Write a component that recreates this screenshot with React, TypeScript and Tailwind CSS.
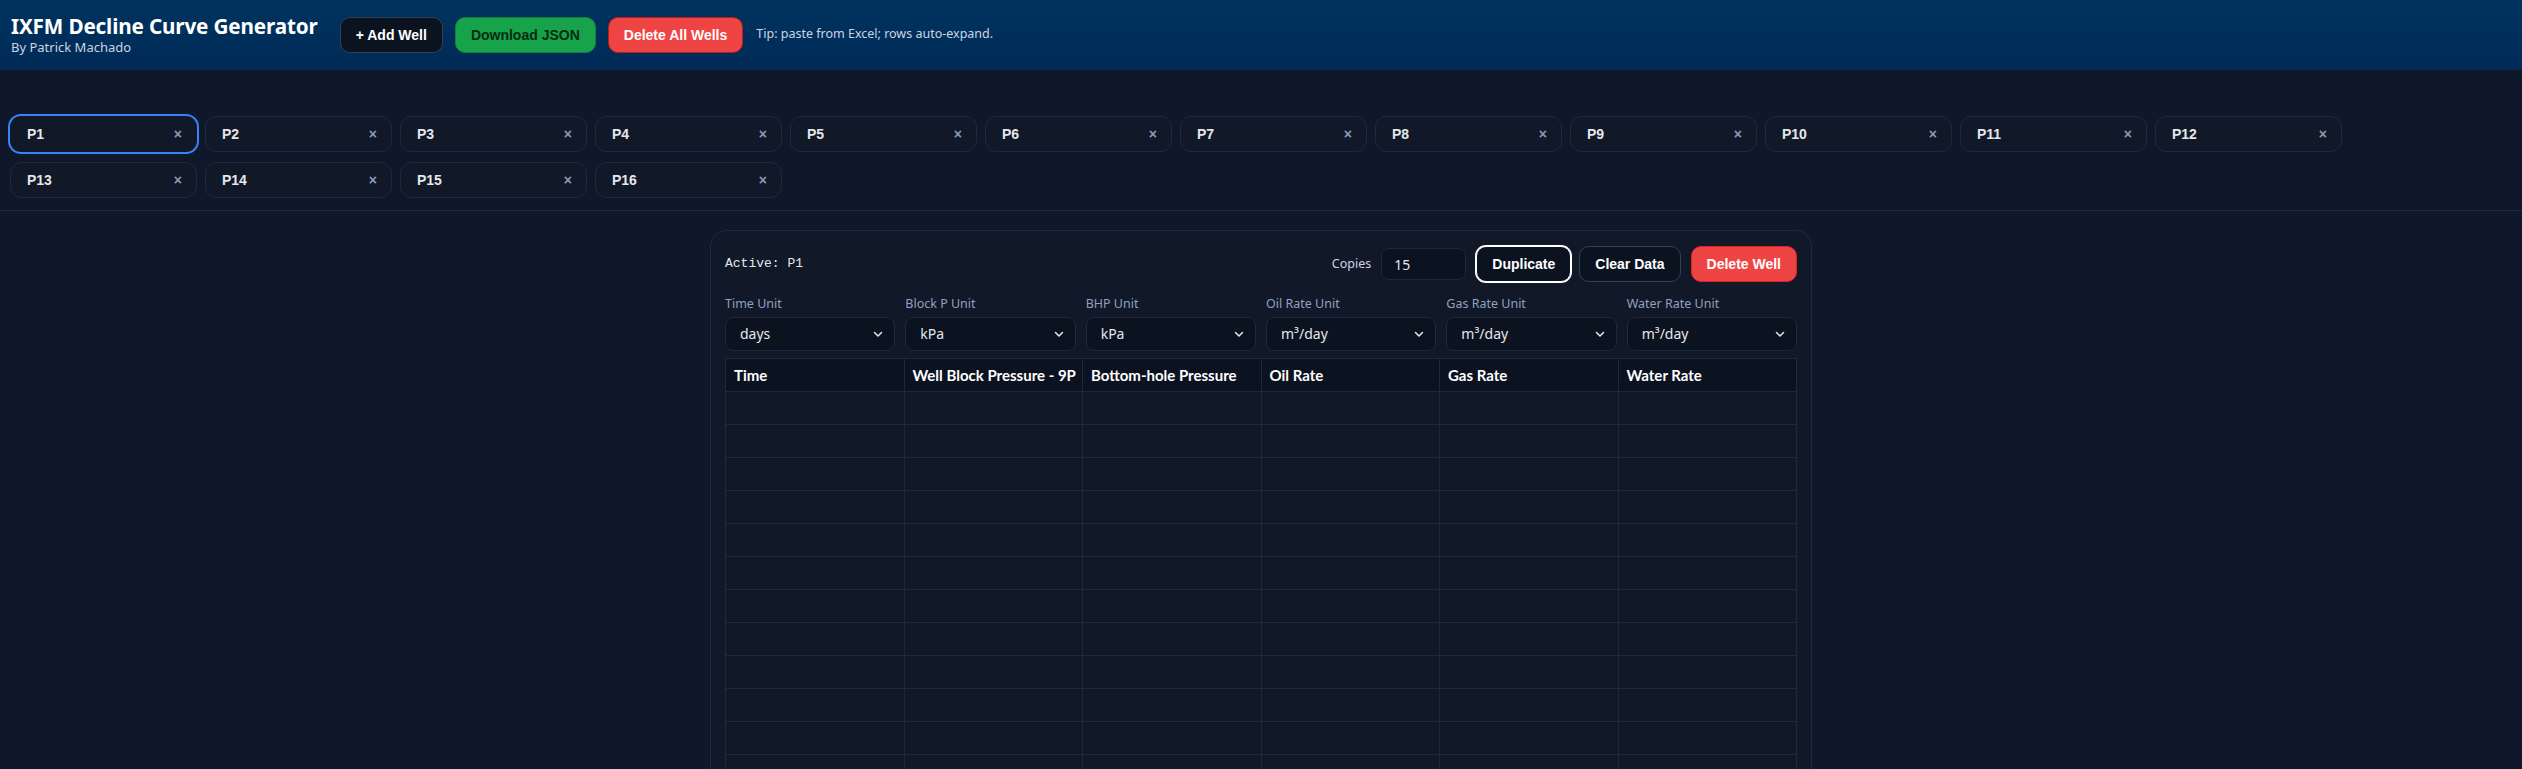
import React from "react";

const units = [
  { label: "Time Unit", value: "days", options: ["days", "months", "years"] },
  { label: "Block P Unit", value: "kPa", options: ["kPa", "psi", "bar"] },
  { label: "BHP Unit", value: "kPa", options: ["kPa", "psi", "bar"] },
  { label: "Oil Rate Unit", value: "m³/day", options: ["m³/day", "bbl/day"] },
  { label: "Gas Rate Unit", value: "m³/day", options: ["m³/day", "Mscf/day"] },
  { label: "Water Rate Unit", value: "m³/day", options: ["m³/day", "bbl/day"] },
];

const cols = [
  "Time",
  "Well Block Pressure - 9P",
  "Bottom-hole Pressure",
  "Oil Rate",
  "Gas Rate",
  "Water Rate",
];

function Chevron() {
  return (
    <svg
      className="pointer-events-none absolute right-[11px] top-1/2 h-3 w-3 -translate-y-1/2"
      viewBox="0 0 24 24"
      fill="none"
      stroke="#e5e7eb"
      strokeWidth="3"
      strokeLinecap="round"
      strokeLinejoin="round"
    >
      <polyline points="5 9 12 16 19 9" />
    </svg>
  );
}

export default function App() {
  const tabs = Array.from({ length: 16 }, (_, i) => `P${i + 1}`);
  const rows = Array.from({ length: 20 }, (_, i) => i);
  return (
    <div className="min-h-screen bg-[#0f172a] font-['Noto_Sans','Liberation_Sans',sans-serif] text-[#e5e7eb]">
      <header className="flex h-[70px] items-center gap-[22px] border-b border-[#12284a] bg-linear-to-b from-[#00345f] to-[#002a57] px-[11px]">
        <div className="flex flex-col">
          <div className="text-[20.7px] font-bold leading-[26px] tracking-[-0.15px] text-white">IXFM Decline Curve Generator</div>
          <div className="text-[13px] leading-[17px] text-[#cbd5e1]">By Patrick Machado</div>
        </div>
        <div className="flex items-center gap-3 font-['Liberation_Sans',Arial,sans-serif]">
          <button className="h-9 rounded-[10px] border border-[#334155] bg-[#0b1220] px-[15px] text-sm font-bold text-white">
            + Add Well
          </button>
          <button className="h-9 rounded-[10px] border border-[#15803d] bg-[#16a34a] px-[15px] text-sm font-bold text-[#062a14]">
            Download JSON
          </button>
          <button className="h-9 rounded-[10px] border border-[#b91c1c] bg-[#ef4444] px-[15px] text-sm font-bold text-white">
            Delete All Wells
          </button>
          <span className="ml-[1px] font-['Noto_Sans',sans-serif] text-[12.5px] text-[#cbd5e1]">
            Tip: paste from Excel; rows auto-expand.
          </span>
        </div>
      </header>

      <div className="flex flex-wrap gap-x-2 gap-y-2.5 border-b border-[#1e293b] px-[10px] pb-[12px] pt-[46px]">
        {tabs.map((t, i) => (
          <div
            key={t}
            className={
              i === 0
                ? "flex h-9 w-[187px] items-center justify-between rounded-[11px] border border-transparent bg-[#111827] pl-4 pr-[14px] ring-2 ring-[#3b82f6]"
                : "flex h-9 w-[187px] items-center justify-between rounded-[11px] border border-[#1e293b] bg-[#111827] pl-4 pr-[14px]"
            }
          >
            <span className="font-['Liberation_Sans',Arial,sans-serif] text-sm font-bold text-[#e5e7eb]">{t}</span>
            <span className="font-['Liberation_Sans',Arial,sans-serif] text-[14px] font-bold text-[#8a9bb4]">×</span>
          </div>
        ))}
      </div>

      <div className="mx-auto mt-[19px] w-[1102px] rounded-2xl border border-[#1e293b] bg-[#111827] p-[14px]">
        <div className="flex h-[38px] items-center">
          <span className="font-['Liberation_Mono',monospace] text-[13px] text-[#e2e8f0]">Active: P1</span>
          <div className="ml-auto flex items-center">
            <span className="mr-[10px] text-[12.5px] text-[#cbd5e1]">Copies</span>
            <input
              defaultValue="15"
              className="mr-[10px] h-8 w-[85px] rounded-lg border border-[#1e293b] bg-[#0b1220] px-3 text-sm text-[#e5e7eb] outline-none"
            />
            <button className="mr-2 h-9 rounded-[10px] border border-white bg-[#0b1220] px-[15px] font-['Liberation_Sans',Arial,sans-serif] text-sm font-bold text-white ring-1 ring-white">
              Duplicate
            </button>
            <button className="mr-[10px] h-9 rounded-[10px] border border-[#334155] bg-[#0b1220] px-[15px] font-['Liberation_Sans',Arial,sans-serif] text-sm font-bold text-white">
              Clear Data
            </button>
            <button className="h-9 rounded-[10px] border border-[#dc2626] bg-[#ef4444] px-[15px] font-['Liberation_Sans',Arial,sans-serif] text-sm font-bold text-white">
              Delete Well
            </button>
          </div>
        </div>

        <div className="mt-3 grid grid-cols-6 gap-2.5">
          {units.map((u) => (
            <div key={u.label} className="flex flex-col">
              <span className="mb-1 text-[12.5px] leading-[18px] text-[#8ea2c0]">{u.label}</span>
              <div className="relative">
                <select
                  defaultValue={u.value}
                  className="h-[34px] w-full appearance-none rounded-lg border border-[#1e293b] bg-[#0b1220] pl-[14px] text-sm text-[#e5e7eb] outline-none"
                >
                  {u.options.map((o) => (
                    <option key={o}>{o}</option>
                  ))}
                </select>
                <Chevron />
              </div>
            </div>
          ))}
        </div>

        <table className="mt-[7px] w-full table-fixed border-collapse border border-[#1e293b]">
          <thead>
            <tr>
              {cols.map((c) => (
                <th
                  key={c}
                  className="h-[33px] overflow-hidden border border-[#1e293b] bg-[#0b1220] px-2 text-left font-['Lato',sans-serif] text-[15px] font-bold whitespace-nowrap text-white"
                >
                  {c}
                </th>
              ))}
            </tr>
          </thead>
          <tbody>
            {rows.map((r) => (
              <tr key={r}>
                {cols.map((c) => (
                  <td key={c} className="h-[33px] border border-[#1e293b] bg-[#111827]" />
                ))}
              </tr>
            ))}
          </tbody>
        </table>
      </div>
    </div>
  );
}
